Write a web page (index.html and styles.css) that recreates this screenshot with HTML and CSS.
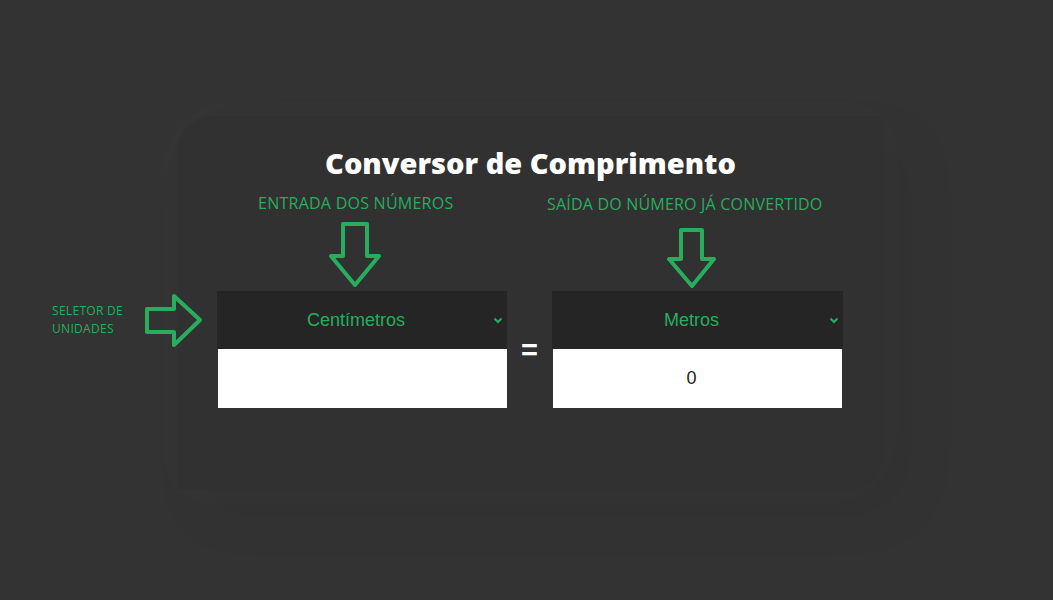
FILE: index.html
```html
<!DOCTYPE html>
<html lang="pt-BR">
<head>
<meta charset="utf-8">
<title>Conversor de Comprimento</title>
<link rel="stylesheet" href="styles.css">
</head>
<body>
<div class="page">
  <main class="card">
    <h1 class="title">Conversor de Comprimento</h1>
    <div class="converter">
      <div class="unit">
        <div class="select-wrap">
          <select class="select">
            <option>Centímetros</option>
            <option>Metros</option>
            <option>Quilômetros</option>
          </select>
          <svg class="chevron" width="10" height="7" viewBox="0 0 10 7"><path d="M1.5 1.5 L5 5 L8.5 1.5" fill="none" stroke="#28ad5e" stroke-width="2"/></svg>
        </div>
        <input class="field" type="text" value="">
      </div>
      <div class="equals">=</div>
      <div class="unit unit-right">
        <div class="select-wrap">
          <select class="select">
            <option>Metros</option>
            <option>Centímetros</option>
            <option>Quilômetros</option>
          </select>
          <svg class="chevron" width="10" height="7" viewBox="0 0 10 7"><path d="M1.5 1.5 L5 5 L8.5 1.5" fill="none" stroke="#28ad5e" stroke-width="2"/></svg>
        </div>
        <input class="field" type="text" value="0" readonly>
      </div>
    </div>
  </main>

  <div class="note note-input">ENTRADA DOS NÚMEROS</div>
  <div class="note note-output">SAÍDA DO NÚMERO JÁ CONVERTIDO</div>
  <div class="note note-selector">SELETOR DE<br>UNIDADES</div>

  <svg class="arrow arrow-input" width="56" height="70" viewBox="0 0 56 70"><polygon points="16,4 40,4 40,36 52,36 28,65 4,36 16,36" fill="none" stroke="#28ad5e" stroke-width="4" stroke-linejoin="round"/></svg>
  <svg class="arrow arrow-output" width="54" height="64" viewBox="0 0 54 64"><polygon points="16,4 37,4 37,33 49,33 27,60 4,33 16,33" fill="none" stroke="#28ad5e" stroke-width="4" stroke-linejoin="round"/></svg>
  <svg class="arrow arrow-selector" width="62" height="57" viewBox="0 0 62 57"><polygon points="4,17 31,17 31,4 57,28 31,53 31,40 4,40" fill="none" stroke="#28ad5e" stroke-width="4" stroke-linejoin="round"/></svg>
</div>
</body>
</html>
```

FILE: styles.css
```css
html, body {
  margin: 0;
  padding: 0;
  background: #333333;
}

.page {
  position: relative;
  width: 1053px;
  height: 600px;
  box-sizing: border-box;
  padding: 116px 0 0 177px;
  overflow: hidden;
}

.card {
  width: 707px;
  height: 374px;
  box-sizing: border-box;
  padding: 29px 40px 0 40px;
  background: #313131;
  border-radius: 36px 0 36px 0;
  box-shadow: 0 0 70px 30px rgba(255, 255, 255, 0.01), 25px 25px 60px rgba(0, 0, 0, 0.05);
}

.title {
  margin: 0;
  height: 36px;
  line-height: 36px;
  text-align: center;
  color: #ffffff;
  font-family: "Open Sans", "DejaVu Sans", sans-serif;
  font-weight: 800;
  font-size: 29px;
  letter-spacing: 0;
}

.converter {
  margin-top: 110px;
  display: flex;
  align-items: center;
}

.unit {
  width: 290px;
  display: flex;
  flex-direction: column;
}

.unit-right {
  width: 291px;
}

.select-wrap {
  position: relative;
  height: 58px;
  background: #252525;
}

.select {
  appearance: none;
  -webkit-appearance: none;
  width: 100%;
  height: 58px;
  border: 0;
  outline: 0;
  margin: 0;
  padding: 0 12px 0 0;
  background: transparent;
  color: #28ad5e;
  font-family: "Liberation Sans", Arial, sans-serif;
  font-size: 18px;
  text-align: center;
  text-align-last: center;
}

.chevron {
  position: absolute;
  right: 4px;
  top: 26px;
  pointer-events: none;
}

.field {
  display: block;
  height: 59px;
  margin: 0 0 0 1px;
  padding: 0 12px 0 0;
  border: 0;
  outline: 0;
  background: #ffffff;
  color: #222222;
  font-family: "Liberation Sans", Arial, sans-serif;
  font-size: 18px;
  text-align: center;
  box-sizing: border-box;
  width: calc(100% - 1px);
}

.unit-right .field {
  margin: 0 1px;
  width: calc(100% - 2px);
}

.equals {
  width: 45px;
  text-align: center;
  color: #ffffff;
  font-family: "Liberation Sans", Arial, sans-serif;
  font-weight: bold;
  font-size: 29px;
  line-height: 28px;
  padding-top: 1px;
}

.note {
  position: absolute;
  color: #28ad5e;
  font-family: "Open Sans", "Noto Sans", sans-serif;
  white-space: nowrap;
}

.note-input {
  left: 258px;
  top: 192px;
  font-size: 16px;
  line-height: 22px;
  letter-spacing: 0.25px;
}

.note-output {
  left: 547px;
  top: 193px;
  font-size: 16px;
  line-height: 22px;
  letter-spacing: 0.2px;
}

.note-selector {
  left: 52px;
  top: 302px;
  font-size: 12px;
  line-height: 18px;
  letter-spacing: 0.3px;
}

.arrow {
  position: absolute;
}

.arrow-input {
  left: 327px;
  top: 220px;
}

.arrow-output {
  left: 665px;
  top: 226px;
}

.arrow-selector {
  left: 143px;
  top: 292px;
}
```
